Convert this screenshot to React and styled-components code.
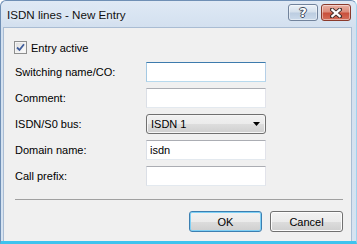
import React from "react";
import styled, { createGlobalStyle } from "styled-components";

const Global = createGlobalStyle`
  html, body { margin: 0; padding: 0; background: #ffffff; }
  body { font-family: "Liberation Sans", Arial, sans-serif; font-size: 11px; color: #000; }
`;

const Window = styled.div`
  box-sizing: border-box;
  width: 357px;
  height: 244px;
  display: flex;
  flex-direction: column;
  border: 1px solid #6f8fb5;
  border-bottom: 3px solid #3ec3ee;
  border-right: 1px solid #9fd3ee;
  border-radius: 6px 6px 0 0;
  background: linear-gradient(180deg, #dfe9f5 0px, #d3e0ef 26px, #d6e3f1 100%);
  padding: 0 4px 0 2px;
`;

const TitleBar = styled.div`
  height: 26px;
  flex: none;
  display: flex;
  align-items: flex-start;
  padding: 3px 1px 0 4px;
  box-sizing: border-box;
`;

const Title = styled.div`
  flex: 1;
  font-size: 11.6px;
  line-height: 16px;
  padding-top: 3px;
  color: #111;
  text-shadow: 0 0 6px rgba(255, 255, 255, 0.9);
  white-space: nowrap;
`;

const CaptionButtons = styled.div`
  display: flex;
  gap: 3px;
`;

const CaptionButton = styled.div`
  box-sizing: border-box;
  width: 30px;
  height: 17px;
  border-radius: 3px;
  display: flex;
  align-items: center;
  justify-content: center;
  border: 1px solid ${(p) => (p.$close ? "#8a3a2c" : "#71839c")};
  box-shadow: inset 0 0 0 1px rgba(255, 255, 255, 0.45);
  background: ${(p) =>
    p.$close
      ? "linear-gradient(180deg, #e9b0a4 0%, #dc8c7b 45%, #c9503c 55%, #d46e5a 100%)"
      : "linear-gradient(180deg, #ebf1f8 0%, #d5e0ec 45%, #bccde1 55%, #cbdaeb 100%)"};
`;

const HelpGlyph = styled.span`
  font-family: "DejaVu Sans", sans-serif;
  font-weight: bold;
  font-size: 13px;
  line-height: 13px;
  color: #ffffff;
  text-shadow: 1px 0 0 #3d4a5c, -1px 0 0 #3d4a5c, 0 1px 0 #3d4a5c, 0 -1px 0 #3d4a5c;
`;

const Client = styled.div`
  flex: 1;
  background: #f0f0f0;
  border: 1px solid #a9bcd3;
  border-bottom: none;
  display: flex;
  flex-direction: column;
  padding: 13px 8px 0 10px;
`;

const CheckRow = styled.label`
  display: flex;
  align-items: center;
  gap: 4px;
  height: 13px;
`;

const CheckBox = styled.span`
  box-sizing: border-box;
  width: 13px;
  height: 13px;
  border: 1px solid #8e8f8f;
  background: linear-gradient(135deg, #dcdcdc 0%, #f4f4f4 70%, #ffffff 100%);
  box-shadow: inset 0 0 0 1px #f4f4f4;
  display: flex;
  align-items: center;
  justify-content: center;
`;

const Form = styled.div`
  display: grid;
  grid-template-columns: 131px 120px;
  grid-auto-rows: 20px;
  row-gap: 6px;
  margin-top: 8px;
  padding-left: 1px;
`;

const Label = styled.div`
  display: flex;
  align-items: center;
`;

const TextInput = styled.input`
  box-sizing: border-box;
  width: 120px;
  height: 20px;
  margin: 0;
  padding: 0 3px;
  font-family: inherit;
  font-size: 11px;
  color: #000;
  background: #fff;
  outline: none;
  border: 1px solid;
  border-color: ${(p) =>
    p.$focused
      ? "#3d7bad #b5cfe7 #b7d9ed #a4c9e3"
      : "#abadb3 #e2e3ea #e3e9ef #dbdfe6"};
`;

const Combo = styled.div`
  box-sizing: border-box;
  width: 120px;
  height: 20px;
  border: 1px solid #707070;
  border-radius: 3px;
  box-shadow: inset 0 0 0 1px #f6f6f6;
  background: linear-gradient(180deg, #f2f2f2 0%, #ebebeb 50%, #dddddd 51%, #cfcfcf 100%);
  display: flex;
  align-items: center;
  justify-content: space-between;
  padding: 0 5px 0 4px;
`;

const Separator = styled.div`
  height: 1px;
  background: #a0a0a0;
  margin: 13px 0 0 1px;
`;

const ButtonRow = styled.div`
  display: flex;
  justify-content: flex-end;
  gap: 8px;
  margin-top: 11px;
`;

const Button = styled.div`
  box-sizing: border-box;
  width: 73px;
  height: 21px;
  border-radius: 3px;
  display: flex;
  align-items: center;
  justify-content: center;
  border: 1px solid ${(p) => (p.$default ? "#3c7fb1" : "#707070")};
  box-shadow: inset 0 0 0 1px ${(p) => (p.$default ? "#7fd0f5" : "#fcfcfc")};
  background: linear-gradient(180deg, #f2f2f2 0%, #ebebeb 50%, #dddddd 51%, #cfcfcf 100%);
`;

const fields = [
  { label: "Switching name/CO:", value: "", focused: true },
  { label: "Comment:", value: "" },
  { label: "ISDN/S0 bus:", combo: "ISDN 1" },
  { label: "Domain name:", value: "isdn" },
  { label: "Call prefix:", value: "" },
];

export default function App() {
  return (
    <>
      <Global />
      <Window>
        <TitleBar>
          <Title>ISDN lines - New Entry</Title>
          <CaptionButtons>
            <CaptionButton>
              <HelpGlyph>?</HelpGlyph>
            </CaptionButton>
            <CaptionButton $close>
              <svg width="12" height="10" viewBox="0 0 12 10">
                <path d="M2 1.5 L10 8.5 M10 1.5 L2 8.5" stroke="#3b2a28" strokeWidth="4" strokeLinecap="square" />
                <path d="M2.3 1.8 L9.7 8.2 M9.7 1.8 L2.3 8.2" stroke="#ffffff" strokeWidth="2.2" strokeLinecap="square" />
              </svg>
            </CaptionButton>
          </CaptionButtons>
        </TitleBar>
        <Client>
          <CheckRow>
            <CheckBox>
              <svg width="9" height="9" viewBox="0 0 9 9">
                <path d="M1 4.5 L3.5 7 L8 1.2" fill="none" stroke="#3f5d9c" strokeWidth="1.8" />
              </svg>
            </CheckBox>
            Entry active
          </CheckRow>
          <Form>
            {fields.map((f) => (
              <React.Fragment key={f.label}>
                <Label>{f.label}</Label>
                {f.combo ? (
                  <Combo>
                    <span>{f.combo}</span>
                    <svg width="7" height="4" viewBox="0 0 7 4">
                      <path d="M0 0 H7 L3.5 4 Z" fill="#000" />
                    </svg>
                  </Combo>
                ) : (
                  <TextInput defaultValue={f.value} $focused={f.focused} />
                )}
              </React.Fragment>
            ))}
          </Form>
          <Separator />
          <ButtonRow>
            <Button $default>OK</Button>
            <Button>Cancel</Button>
          </ButtonRow>
        </Client>
      </Window>
    </>
  );
}
